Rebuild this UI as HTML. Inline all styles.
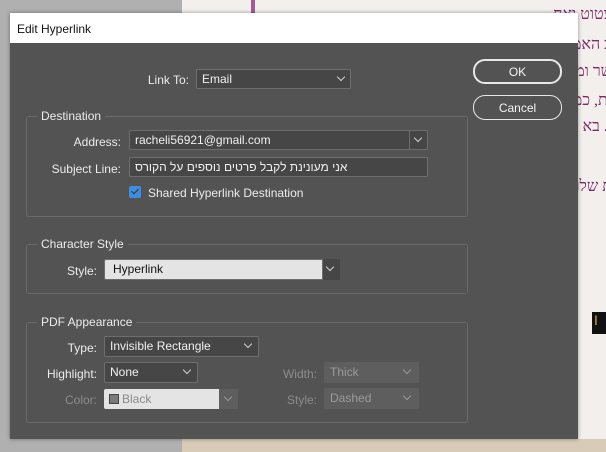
<!DOCTYPE html>
<html><head><meta charset="utf-8"><style>
*{box-sizing:border-box;margin:0;padding:0}
body{width:606px;height:452px;overflow:hidden;position:relative;background:#b0b0b0;font-family:"Liberation Sans","Noto Sans CJK SC",sans-serif;font-size:12px;color:#ececec}
.abs{position:absolute}
#paper{left:182px;top:0;width:424px;height:452px;background:#f2efec}
#pline{left:251px;top:0;width:4px;height:14px;background:#a45a96}
.heb{position:absolute;right:-6px;width:60px;direction:rtl;text-align:right;color:#7a2a68;font-family:"Liberation Serif","Noto Serif CJK SC",serif;font-size:16px;white-space:nowrap;overflow:hidden}
#bottom{left:182px;top:439px;width:424px;height:13px;background:#d8cbb8}
#dlg{left:10px;top:13px;width:568px;height:426px;background:#535353;box-shadow:0 0 4px rgba(0,0,0,.4)}
#title{left:10px;top:13px;width:568px;height:30px;background:#fff;color:#111;font-size:12px;padding:9px 0 0 7px}
.lbl{position:absolute;text-align:right;white-space:nowrap}
.dd{position:absolute;border:1px solid #6e6e6e;border-radius:2px;background:#464646;color:#f0f0f0;padding:2px 0 0 5px;white-space:nowrap}
.chev{position:absolute;width:6px;height:6px;border-right:1.2px solid #cfcfcf;border-bottom:1.2px solid #cfcfcf;transform:rotate(45deg)}
.grp{position:absolute;border:1px solid #6a6a6a;border-radius:3px}
.leg{position:absolute;background:#535353;padding:0 4px;white-space:nowrap}
.btn{position:absolute;border:2px solid #e8e8e8;border-radius:12px;text-align:center;color:#f5f5f5}
.dis{color:#8c8c8c}
.dd.d{background:#5e5e5e;border-color:#5e5e5e;color:#9a9a9a}
</style></head><body>
<div id="paper" class="abs"></div>
<div id="pline" class="abs"></div>
<div class="heb" style="top:6px">צטוט ואחרי</div>
<div class="heb" style="top:36px">כ האמת</div>
<div class="heb" style="top:63px">שר ומו</div>
<div class="heb" style="top:92px">ית, כמו</div>
<div class="heb" style="top:118px">י. בא</div>
<div class="heb" style="top:178px">ת שלו</div>
<div class="abs" style="left:592px;top:312px;width:14px;height:22px;background:#111;color:#d9a044;font-size:14px;padding-left:2px">I</div>
<div id="bottom" class="abs"></div>
<div id="dlg" class="abs"></div>
<div id="title" class="abs">Edit Hyperlink</div>

<div class="lbl" style="left:130px;width:59px;top:73px">Link To:</div>
<div class="dd" style="left:196px;top:69px;width:155px;height:20px">Email<span class="chev" style="left:141px;top:4px"></span></div>

<div class="btn" style="left:473px;top:59px;width:89px;height:25px;padding-top:4px">OK</div>
<div class="btn" style="left:473px;top:95px;width:89px;height:25px;border-width:1px;padding-top:5px">Cancel</div>

<div class="grp" style="left:26px;top:116px;width:442px;height:101px"></div>
<div class="leg" style="left:37px;top:109px">Destination</div>
<div class="lbl" style="left:50px;width:71px;top:135px">Address:</div>
<div class="dd" style="left:129px;top:130px;width:299px;height:20px">racheli56921@gmail.com<span style="position:absolute;left:279px;top:0;width:1px;height:18px;background:#6e6e6e"></span><span class="chev" style="left:285px;top:4px"></span></div>
<div class="lbl" style="left:30px;width:91px;top:162px">Subject Line:</div>
<div class="dd" style="left:129px;top:157px;width:299px;height:20px">אני מעונינת לקבל פרטים נוספים על הקורס</div>
<div class="abs" style="left:129px;top:186px;width:12px;height:12px;background:#3d8de0;border-radius:2px"></div>
<div class="abs" style="left:133px;top:187px;width:4px;height:7px;border-right:1.5px solid #333;border-bottom:1.5px solid #333;transform:rotate(45deg)"></div>
<div class="abs" style="left:148px;top:186px">Shared Hyperlink Destination</div>

<div class="grp" style="left:26px;top:244px;width:442px;height:50px"></div>
<div class="leg" style="left:37px;top:237px">Character Style</div>
<div class="lbl" style="left:50px;width:47px;top:264px">Style:</div>
<div class="dd" style="left:104px;top:259px;width:236px;height:21px;background:#e4e4e4;color:#111;padding-left:8px">Hyperlink<span style="position:absolute;left:217px;top:-1px;width:18px;height:21px;background:#464646;border-left:1px solid #6e6e6e"></span><span class="chev" style="left:222px;top:4px"></span></div>

<div class="grp" style="left:26px;top:322px;width:442px;height:101px"></div>
<div class="leg" style="left:37px;top:315px">PDF Appearance</div>
<div class="lbl" style="left:50px;width:47px;top:341px">Type:</div>
<div class="dd" style="left:104px;top:336px;width:155px;height:21px">Invisible Rectangle<span class="chev" style="left:140px;top:4px"></span></div>
<div class="lbl" style="left:30px;width:67px;top:367px">Highlight:</div>
<div class="dd" style="left:104px;top:362px;width:94px;height:21px">None<span class="chev" style="left:79px;top:4px"></span></div>
<div class="lbl dis" style="left:50px;width:47px;top:393px">Color:</div>
<div class="dd" style="left:104px;top:389px;width:134px;height:20px;background:#e4e4e4;border-color:#e4e4e4;color:#8a8a8a;padding-left:4px"><span style="display:inline-block;width:10px;height:10px;background:#7a7a7a;border:1px solid #444;vertical-align:-1px;margin-right:3px"></span>Black<span style="position:absolute;left:114px;top:-1px;width:19px;height:20px;background:#5e5e5e"></span><span class="chev" style="left:120px;top:4px;border-color:#999"></span></div>
<div class="lbl dis" style="left:260px;width:57px;top:367px">Width:</div>
<div class="dd d" style="left:324px;top:362px;width:95px;height:21px">Thick<span class="chev" style="left:79px;top:4px;border-color:#999"></span></div>
<div class="lbl dis" style="left:260px;width:57px;top:393px">Style:</div>
<div class="dd d" style="left:324px;top:388px;width:95px;height:21px">Dashed<span class="chev" style="left:79px;top:4px;border-color:#999"></span></div>
</body></html>
